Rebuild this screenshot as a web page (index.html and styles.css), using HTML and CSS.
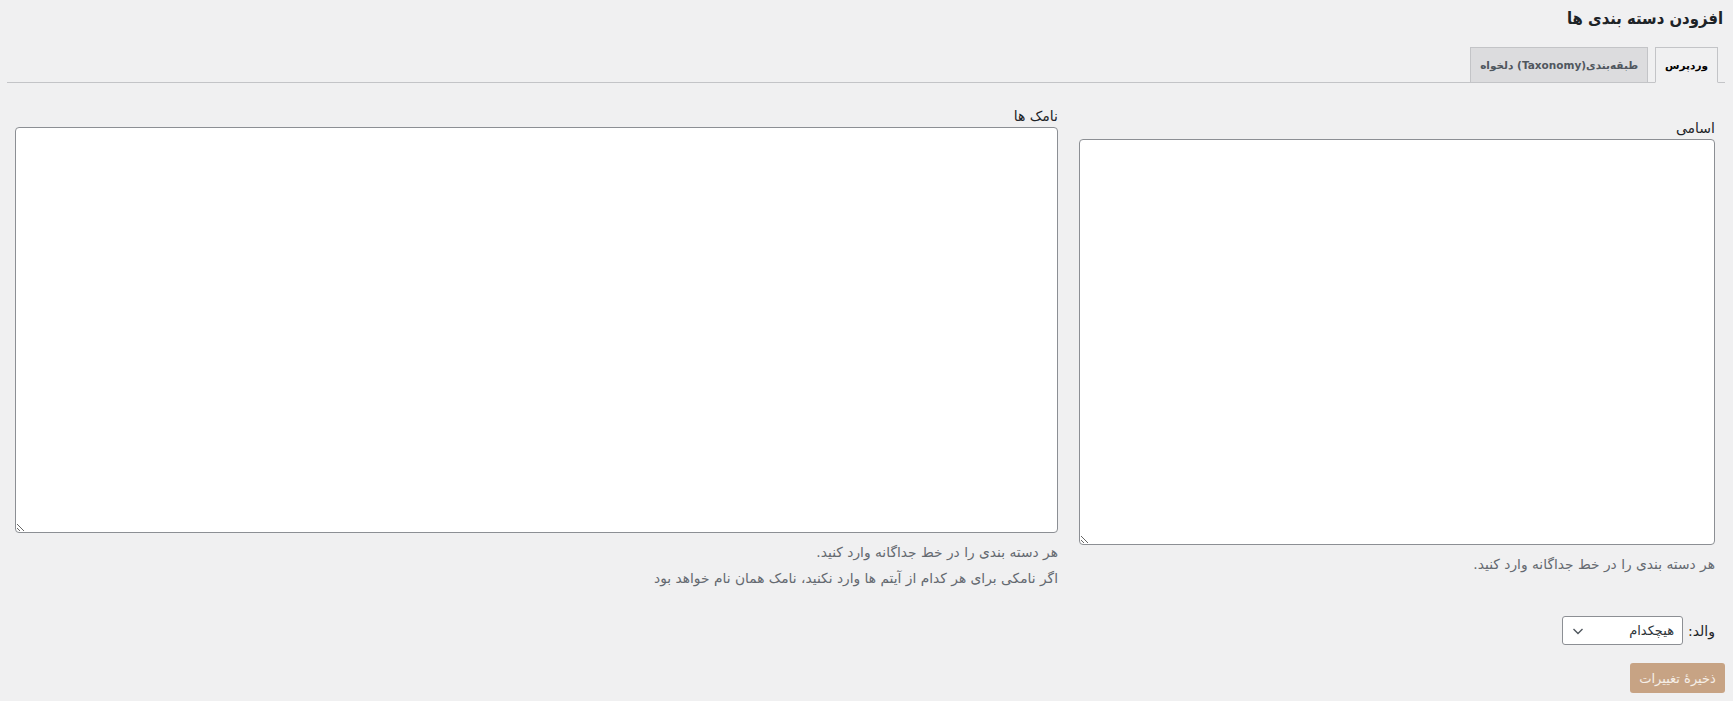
FILE: index.html
```html
<!DOCTYPE html>
<html lang="fa" dir="rtl">
  <head>
    <meta charset="UTF-8" />
    <meta name="viewport" content="width=device-width, initial-scale=1.0" />
    <title>افزودن دسته بندی ها</title>
    <link rel="stylesheet" href="styles.css">
  </head>
  <body>
    <div class="wrap">
      <h1>افزودن دسته بندی ها</h1>

      <nav class="nav-tab-wrapper">
        <a href="#" class="nav-tab nav-tab-active">وردپرس</a>
        <a href="#" class="nav-tab">طبقه‌بندی(Taxonomy) دلخواه</a>
      </nav>

      <form id="bulkForm" class="bulk-form">
        <div class="columns">
          <div class="col col-names">
            <label for="names">اسامی</label>
            <textarea id="names" name="names"></textarea>
            <p class="description">هر دسته بندی را در خط جداگانه وارد کنید.</p>
          </div>

          <div class="col col-slugs">
            <label for="slugs">نامک ها</label>
            <textarea id="slugs" name="slugs"></textarea>
            <p class="description">هر دسته بندی را در خط جداگانه وارد کنید.</p>
            <p class="description">اگر نامکی برای هر کدام از آیتم ها وارد نکنید، نامک همان نام خواهد بود</p>
          </div>
        </div>

        <div class="parent-row">
          <label for="parent">والد:</label>
          <div class="select-wrap">
            <select id="parent" name="parent">
              <option value="0">هیچکدام</option>
            </select>
            <svg class="chevron" width="16" height="16" viewBox="0 0 16 16">
              <path d="M3.5 6l4.5 4.5L12.5 6" fill="none" stroke="#50575e" stroke-width="1.4" />
            </svg>
          </div>
        </div>

        <button type="submit" class="button-primary" disabled>ذخیرهٔ تغییرات</button>
      </form>
    </div>
  </body>
</html>
```

FILE: styles.css
```css
body {
  margin: 0;
  background-color: #f0f0f1;
  color: #1d2327;
  font-family: "DejaVu Sans", Tahoma, sans-serif;
  font-size: 13px;
}
.wrap {
  margin: 0 8px 0 7px;
}
h1 {
  margin: 0;
  padding: 5px 2px 0 0;
  font-family: "DejaVu Sans Condensed", "DejaVu Sans", sans-serif;
  font-size: 16.5px;
  font-weight: bold;
  line-height: 28px;
}
.nav-tab-wrapper {
  display: flex;
  margin-top: 14px;
  padding-right: 7px;
  border-bottom: 1px solid #c3c4c7;
}
.nav-tab {
  display: block;
  margin-left: 7px;
  margin-bottom: -1px;
  padding: 5px 9px;
  height: 24px;
  line-height: 24px;
  border: 1px solid #c3c4c7;
  background-color: #dcdcde;
  color: #50575e;
  font-size: 10.5px;
  font-weight: bold;
  text-decoration: none;
  white-space: nowrap;
}
.nav-tab-active {
  background-color: #f0f0f1;
  border-bottom-color: #f0f0f1;
  color: #000;
}
.bulk-form {
  padding: 0 10px 0 0;
}
.columns {
  display: flex;
  align-items: flex-start;
  gap: 21px;
}
.col label {
  display: block;
  font-size: 14px;
  line-height: 18px;
  margin-bottom: 2px;
}
.col-names {
  width: 636px;
  margin-top: 36px;
}
.col-slugs {
  width: 1043px;
  margin-top: 24px;
}
textarea {
  display: block;
  box-sizing: border-box;
  width: 100%;
  height: 406px;
  margin: 0;
  border: 1px solid #8c8f94;
  border-radius: 4px;
  background-color: #fff;
}
.description {
  margin: 10px 0 0;
  color: #646970;
  font-size: 13.8px;
  line-height: 18px;
}
.col-slugs .description + .description {
  margin-top: 8px;
}
.parent-row {
  display: flex;
  align-items: center;
  gap: 5px;
  margin-top: 29px;
}
.parent-row label {
  font-size: 14px;
}
.select-wrap {
  position: relative;
}
select {
  -webkit-appearance: none;
  appearance: none;
  width: 121px;
  height: 29px;
  padding: 0 8px 0 24px;
  border: 1px solid #8c8f94;
  border-radius: 3px;
  background-color: #fff;
  color: #2c3338;
  font-family: inherit;
  font-size: 13px;
}
.chevron {
  position: absolute;
  left: 8px;
  top: 7px;
  pointer-events: none;
}
.button-primary {
  display: block;
  margin: 18px -10px 0 0;
  width: 95px;
  height: 30px;
  padding: 0;
  border: none;
  border-radius: 3px;
  background-color: #c7a384;
  color: #f6efe8;
  font-family: inherit;
  font-size: 13px;
  white-space: nowrap;
}
```
